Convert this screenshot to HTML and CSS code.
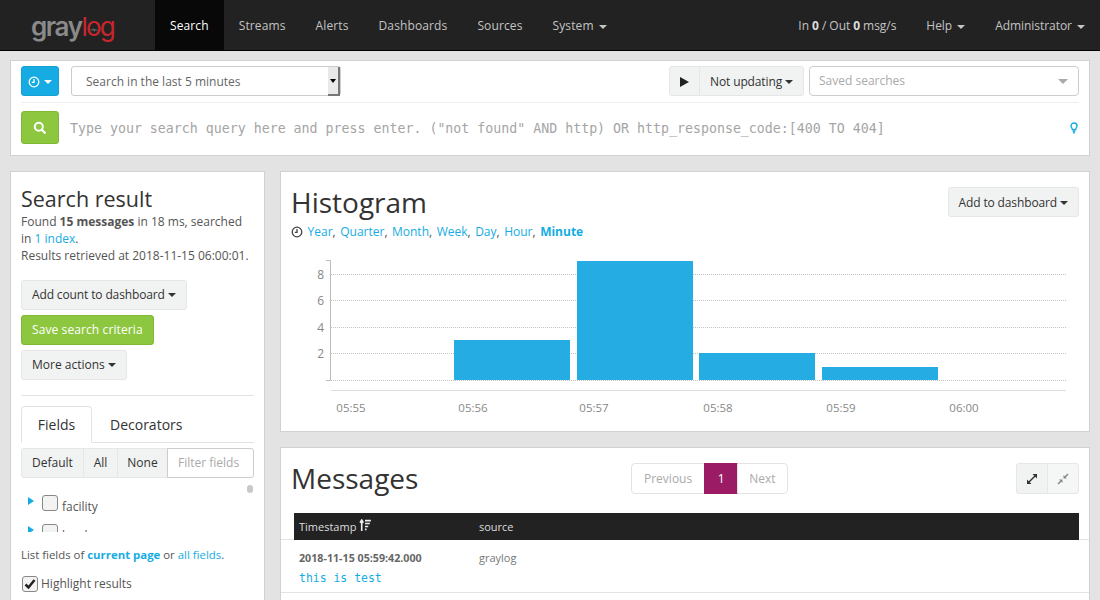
FILE: index.html
```html
<!DOCTYPE html>
<html lang="en">
<head>
    <meta charset="UTF-8">
    <title>Graylog - Search</title>
    <link rel="stylesheet" href="styles.css">
</head>
<body>
    <nav class="navbar">
        <a class="brand">
            <span class="brand-gray">gray</span><span class="brand-red">l<span class="brand-o">o<svg viewBox="0 0 12 8"><path d="M1 4h3l1-2 1.500 4 1-3 .5 1h3"/></svg></span>g</span>
        </a>
        <ul class="nav-links nav-left">
            <li class="active">Search</li>
            <li>Streams</li>
            <li>Alerts</li>
            <li>Dashboards</li>
            <li>Sources</li>
            <li>System <i class="caret"></i></li>
        </ul>
        <ul class="nav-links nav-right">
            <li>In <b>0</b> / Out <b>0</b> msg/s</li>
            <li>Help <i class="caret"></i></li>
            <li>Administrator <i class="caret"></i></li>
        </ul>
    </nav>

    <main class="page">
        <section class="box search-bar">
            <div class="search-top">
                <button class="btn btn-info btn-range">
                    <svg class="icon" viewBox="0 0 12 12"><circle cx="6" cy="6" r="4.800"/><path d="M6 3v3.300H3.800"/></svg>
                    <i class="caret"></i>
                </button>
                <div class="range-select">
                    <span class="range-text">Search in the last 5 minutes</span>
                    <span class="range-arrow"></span>
                </div>
                <div class="btn-group refresh">
                    <button class="btn btn-play"><span class="play"></span></button>
                    <button class="btn btn-tight">Not updating <i class="caret"></i></button>
                </div>
                <div class="saved">
                    <span>Saved searches</span>
                    <i class="saved-arrow"></i>
                </div>
            </div>
            <div class="search-query">
                <button class="btn btn-success btn-go">
                    <svg viewBox="0 0 14 14"><circle cx="5.800" cy="5.800" r="4"/><path d="M8.800 8.800l3.700 3.700"/></svg>
                </button>
                <span class="query-text">Type your search query here and press enter. ("not found" AND http) OR http_response_code:[400 TO 404]</span>
                <svg class="bulb" viewBox="0 0 8 12"><path d="M4 1a3 3 0 0 0-3 3c0 1.500 1.300 2.200 1.500 3.800h3C5.700 6.200 7 5.500 7 4a3 3 0 0 0-3-3z"/><path d="M2.800 9.200h2.400M3.200 10.800h1.600"/></svg>
            </div>
        </section>

        <div class="columns">
            <aside class="box sidebar">
                <h2>Search result</h2>
                <p class="summary">Found <b>15 messages</b> in 18 ms, searched in <a>1 index</a>.<br>Results retrieved at 2018-11-15 06:00:01.</p>
                <div class="actions">
                    <button class="btn btn-tight">Add count to dashboard <i class="caret"></i></button>
                    <button class="btn btn-success">Save search criteria</button>
                    <button class="btn">More actions <i class="caret"></i></button>
                </div>
                <hr>
                <div class="tabs">
                    <span class="tab active">Fields</span>
                    <span class="tab">Decorators</span>
                </div>
                <div class="filter-row">
                    <button class="btn">Default</button>
                    <button class="btn">All</button>
                    <button class="btn">None</button>
                    <span class="filter-input">Filter fields</span>
                </div>
                <div class="field-list">
                    <i class="scroll-thumb"></i>
                    <div class="field"><i class="arrow"></i><i class="check"></i><span>facility</span></div>
                    <div class="field"><i class="arrow"></i><i class="check"></i><span>level</span></div>
                </div>
                <p class="list-note">List fields of <a><b>current page</b></a> or <a>all fields</a>.</p>
                <div class="highlight">
                    <i class="check checked"><svg viewBox="0 0 14 14"><path d="M2.500 7.500l3 3 6-7.500"/></svg></i>
                    <span>Highlight results</span>
                </div>
            </aside>

            <div class="main-col">
                <section class="box histogram">
                    <div class="panel-head">
                        <h1>Histogram</h1>
                        <button class="btn btn-tight">Add to dashboard <i class="caret"></i></button>
                    </div>
                    <p class="resolutions">
                        <svg class="icon-clock" viewBox="0 0 12 12"><circle cx="6" cy="6" r="4.800"/><path d="M6 3v3.300H3.800"/></svg>
                        <a>Year</a>, <a>Quarter</a>, <a>Month</a>, <a>Week</a>, <a>Day</a>, <a>Hour</a>, <a><b>Minute</b></a>
                    </p>
                    <svg class="chart" viewBox="0 0 787 164" width="787" height="164">
                        <g class="grid">
                            <path d="M40 24.500H775M40 50.500H775M40 77.500H775M40 103.500H775M40 130.500H775"/>
                        </g>
                        <g class="bars">
                            <rect x="163" y="90" width="116" height="40"/>
                            <rect x="286" y="11" width="116" height="119"/>
                            <rect x="408" y="103" width="116" height="27"/>
                            <rect x="531" y="117" width="116" height="13"/>
                        </g>
                        <path class="axis" d="M35 10.500h4.500v120H35"/>
                        <path class="axis-x" d="M40 140.500H775"/>
                        <g class="y-labels">
                            <text x="33" y="29">8</text>
                            <text x="33" y="55">6</text>
                            <text x="33" y="82">4</text>
                            <text x="33" y="108">2</text>
                        </g>
                        <g class="x-labels">
                            <text x="60" y="162">05:55</text>
                            <text x="182" y="162">05:56</text>
                            <text x="303" y="162">05:57</text>
                            <text x="427" y="162">05:58</text>
                            <text x="550" y="162">05:59</text>
                            <text x="673" y="162">06:00</text>
                        </g>
                    </svg>
                </section>

                <section class="box messages">
                    <div class="panel-head messages-head">
                        <h1>Messages</h1>
                        <div class="pager">
                            <span class="page-item">Previous</span>
                            <span class="page-item current">1</span>
                            <span class="page-item">Next</span>
                        </div>
                        <div class="btn-group expand">
                            <button class="btn">
                                <svg viewBox="0 0 12 12"><path d="M1 11V6.500L5.500 11zM11 1v4.500L6.500 1z"/><path class="arrow-line" d="M3 9l6-6"/></svg>
                            </button>
                            <button class="btn btn-light">
                                <svg viewBox="0 0 12 12"><path d="M5.500 6.500V10L2 6.500zM6.500 5.500V2L10 5.500z"/><path class="arrow-line" d="M1 11l3-3M8 4l3-3"/></svg>
                            </button>
                        </div>
                    </div>
                    <div class="table-wrap">
                        <div class="msg-header">
                            <span class="col-time">Timestamp
                                <svg class="sort" viewBox="0 0 12 12"><path d="M2.500 11V2M1 3.500L2.500 1 4 3.500M5.500 1.500H11M5.500 4.200H10M5.500 6.900H8.500M5.500 9.600H7"/></svg>
                            </span>
                            <span>source</span>
                        </div>
                        <div class="msg-row">
                            <div class="msg-top">
                                <span class="col-time msg-time">2018-11-15 05:59:42.000</span>
                                <span class="msg-source">graylog</span>
                            </div>
                            <code>this is test</code>
                        </div>
                    </div>
                </section>
            </div>
        </div>
    </main>
</body>
</html>
```

FILE: styles.css
```css
* {
    box-sizing: border-box;
}
html, body {
    height: 600px;
    overflow: hidden;
}
body {
    margin: 0;
    background: #e3e3e3;
    color: #555;
    font-family: 'Open Sans', sans-serif;
    font-size: 12px;
    line-height: 17px;
}
a {
    color: #16ace3;
}
b {
    font-weight: 700;
}
h1, h2 {
    margin: 0;
    font-weight: 400;
    color: #333;
}
.caret {
    display: inline-block;
    width: 0;
    height: 0;
    margin-left: 2px;
    vertical-align: middle;
    border-top: 4px solid;
    border-left: 4px solid transparent;
    border-right: 4px solid transparent;
}

/* navbar */
.navbar {
    display: flex;
    height: 51px;
    background: #222;
    border-bottom: 1px solid #000;
    color: #c4c4c4;
}
.brand {
    width: 155px;
    padding-top: 9px;
    padding-left: 31px;
    font-family: 'Inter', sans-serif;
    font-size: 26px;
    line-height: 36px;
    letter-spacing: -1.400px;
}
.brand-gray {
    color: #8a8a8a;
    font-weight: 600;
}
.brand-red {
    color: #c9252c;
    font-weight: 400;
    letter-spacing: -1.800px;
}
.brand-o {
    position: relative;
}
.brand-o svg {
    position: absolute;
    left: 4px;
    top: 16px;
    width: 8px;
    height: 6px;
    fill: none;
    stroke: #8a8a8a;
    stroke-width: 1;
}
.nav-links {
    display: flex;
    margin: 0;
    padding: 0;
    list-style: none;
}
.nav-links li {
    height: 50px;
    padding: 0 15px;
    line-height: 51px;
}
.nav-left li {
    letter-spacing: .12px;
}
.nav-links .active {
    background: #080808;
    color: #fff;
}
.nav-links b {
    color: #ddd;
}
.nav-right {
    margin-left: auto;
    letter-spacing: -.05px;
}

/* shared */
.page {
    padding: 9px 10px 0;
}
.box {
    background: #fff;
    border: 1px solid #d1d1d1;
}
.btn {
    height: 30px;
    padding: 0 10px;
    background: #f1f2f2;
    border: 1px solid #e6e6e6;
    border-radius: 3px;
    color: #333;
    font-family: inherit;
    font-size: 12px;
}
.btn .caret {
    margin-left: 0;
}
.btn-tight {
    letter-spacing: -.13px;
}
.btn-info {
    background: #16ace3;
    border-color: #16a0d3;
    color: #fff;
}
.btn-success {
    background: #8dc63f;
    border-color: #7eb835;
    color: #fff;
    letter-spacing: .1px;
}
.btn-group {
    display: flex;
}
.btn-group .btn:first-child {
    border-radius: 3px 0 0 3px;
}
.btn-group .btn:last-child {
    margin-left: -1px;
    border-radius: 0 3px 3px 0;
}

/* search bar */
.search-bar {
    height: 96px;
    padding: 5px 10px 0;
}
.search-top {
    display: flex;
    height: 37px;
    border-bottom: 1px solid #eee;
}
.btn-range {
    width: 38px;
    height: 30px;
    padding: 0;
}
.btn-range .icon {
    width: 12px;
    height: 12px;
    vertical-align: -2px;
    fill: none;
    stroke: #fff;
    stroke-width: 1.300;
}
.range-select {
    display: flex;
    width: 270px;
    height: 30px;
    margin-left: 12px;
    border: 1px solid #ccc;
    border-radius: 3px;
    color: #666;
}
.range-text {
    flex: 1;
    padding-left: 14px;
    line-height: 29px;
}
.range-arrow {
    position: relative;
    width: 12px;
    height: 29px;
    background: #e9e9e9;
    border-right: 2px solid #777;
    border-bottom: 2px solid #777;
}
.range-arrow::after {
    content: '';
    position: absolute;
    left: 2px;
    top: 12px;
    border-top: 4px solid #000;
    border-left: 3px solid transparent;
    border-right: 3px solid transparent;
}
.refresh {
    margin-left: auto;
}
.btn-play {
    width: 31px;
    padding: 0;
}
.play {
    display: inline-block;
    border-left: 9px solid #222;
    border-top: 5px solid transparent;
    border-bottom: 5px solid transparent;
    vertical-align: middle;
}
.saved {
    display: flex;
    align-items: center;
    justify-content: space-between;
    width: 270px;
    height: 30px;
    margin-left: 5px;
    padding: 0 9px;
    border: 1px solid #ccc;
    border-radius: 4px;
    color: #aaa;
}
.saved span {
    margin-top: -2px;
}
.saved-arrow {
    margin-right: 1px;
    border-top: 5px solid #aaa;
    border-left: 5px solid transparent;
    border-right: 5px solid transparent;
}
.search-query {
    display: flex;
    align-items: center;
    padding-top: 8px;
}
.btn-go {
    width: 38px;
    height: 33px;
    padding: 0;
    line-height: 0;
}
.btn-go svg {
    width: 14px;
    height: 14px;
    fill: none;
    stroke: #fff;
    stroke-width: 2;
}
.query-text {
    margin-top: 1px;
    margin-left: 11px;
    font-family: 'DejaVu Sans Mono', monospace;
    font-size: 13.280px;
    color: #a5a5a5;
    white-space: nowrap;
}
.bulb {
    width: 8px;
    height: 12px;
    margin-left: auto;
    margin-right: 1px;
    fill: none;
    stroke: #16ace3;
    stroke-width: 1.400;
}

/* columns */
.columns {
    display: grid;
    grid-template-columns: 255px 810px;
    gap: 15px;
    margin-top: 15px;
}
.main-col {
    display: flex;
    flex-direction: column;
    gap: 15px;
}

/* sidebar */
.sidebar {
    height: 429px;
    padding: 14px 10px 0;
    border-bottom: 0;
    overflow: hidden;
}
.sidebar h2 {
    font-size: 21.500px;
    line-height: 26px;
}
.summary {
    margin: 1px 0 0;
}
.actions {
    display: flex;
    flex-direction: column;
    align-items: flex-start;
    gap: 5px;
    margin-top: 16px;
}
.actions .btn, .filter-row .btn {
    padding-bottom: 2px;
}
.sidebar hr {
    margin: 15px 0 10px;
    border: 0;
    border-top: 1px solid #e3e3e3;
}
.tabs {
    display: flex;
    height: 37px;
    border-bottom: 1px solid #e3e3e3;
    font-size: 14px;
}
.tab {
    height: 37px;
    padding: 0 18px;
    line-height: 37px;
    color: #333;
}
.tab.active {
    width: 71px;
    background: #fff;
    border: 1px solid #e3e3e3;
    border-bottom-color: #fff;
    border-radius: 4px 4px 0 0;
    line-height: 36px;
    padding: 0;
    text-align: center;
}
.filter-row {
    display: flex;
    margin-top: 5px;
}
.filter-row .btn {
    margin-right: -1px;
    padding-left: 0;
    padding-right: 0;
    border-radius: 0;
}
.filter-row .btn:nth-child(1) {
    width: 63px;
    border-radius: 3px 0 0 3px;
}
.filter-row .btn:nth-child(2) {
    width: 35px;
}
.filter-row .btn:nth-child(3) {
    width: 51px;
}
.filter-input {
    flex: 1;
    height: 30px;
    padding-left: 10px;
    border: 1px solid #ccc;
    border-radius: 0 3px 3px 0;
    line-height: 27px;
    color: #aaa;
}
.field-list {
    position: relative;
    height: 47px;
    margin-top: 7px;
    overflow: hidden;
}
.scroll-thumb {
    position: absolute;
    right: 1px;
    top: 0;
    width: 6px;
    height: 8px;
    background: #c8c8c8;
    border-radius: 3px;
}
.field {
    display: flex;
    align-items: flex-start;
    height: 29px;
    padding: 10px 0 0 7px;
}
.field span {
    margin-left: 4px;
    margin-top: 3px;
}
.arrow {
    margin-top: 2px;
    border-left: 6px solid #16ace3;
    border-top: 4.500px solid transparent;
    border-bottom: 4.500px solid transparent;
}
.check {
    flex: none;
    display: block;
    width: 16px;
    height: 16px;
    margin-left: 8px;
    background: #f3f3f3;
    border: 1px solid #888;
    border-radius: 3px;
}
.list-note {
    margin: 14px 0 0;
    font-size: 11.400px;
}
.highlight {
    display: flex;
    align-items: center;
    gap: 3px;
    margin-top: 12px;
}
.highlight .check {
    margin-left: 1px;
}
.checked svg {
    display: block;
    fill: none;
    stroke: #222;
    stroke-width: 2.500;
}

/* panels */
.panel-head {
    display: flex;
    align-items: flex-start;
    justify-content: space-between;
    padding: 15px 10px 0;
}
.panel-head h1 {
    margin-top: -1px;
    font-size: 28px;
    line-height: 32px;
}
.histogram {
    height: 261px;
}
.resolutions {
    margin: 5px 0 0 10px;
    color: #555;
    word-spacing: 1.400px;
}
.icon-clock {
    width: 12px;
    height: 12px;
    vertical-align: -2px;
    fill: none;
    stroke: #444;
    stroke-width: 1.300;
}
.chart {
    display: block;
    margin: 10px 0 0 10px;
    font-family: 'Open Sans', sans-serif;
    font-size: 11.500px;
}
.grid path {
    fill: none;
    stroke: #c4c4c4;
    stroke-dasharray: 1 1;
}
.bars rect {
    fill: #25ace3;
}
.axis {
    fill: none;
    stroke: #bbb;
}
.axis-x {
    fill: none;
    stroke: #ddd;
}
.y-labels text {
    fill: #888;
    font-size: 12px;
    text-anchor: end;
}
.x-labels text {
    fill: #888;
    text-anchor: middle;
}

/* messages */
.messages {
    height: 153px;
    border-bottom: 0;
    overflow: hidden;
}
.messages-head {
    position: relative;
    height: 65px;
}
.pager {
    position: absolute;
    left: 351px;
    top: 15px;
    display: flex;
}
.page-item {
    height: 31px;
    padding: 0 12px;
    margin-left: -1px;
    border: 1px solid #e3e3e3;
    line-height: 29px;
    color: #aaa;
}
.page-item:first-child {
    border-radius: 4px 0 0 4px;
}
.page-item:last-child {
    padding: 0 11px;
    border-radius: 0 4px 4px 0;
}
.page-item.current {
    width: 34px;
    padding: 0;
    text-align: center;
    background: #9b1c64;
    border-color: #9b1c64;
    color: #fff;
}
.expand {
    margin-left: auto;
}
.expand .btn {
    width: 32px;
    height: 31px;
    padding: 0;
    line-height: 0;
}
.expand .btn-light {
    background: #f5f6f6;
}
.expand svg {
    width: 12px;
    height: 12px;
    fill: #333;
}
.expand .btn-light svg {
    fill: #888;
}
.arrow-line {
    fill: none;
    stroke: #333;
    stroke-width: 1.500;
}
.expand .btn-light .arrow-line {
    stroke: #888;
}
.table-wrap {
    position: relative;
}
.msg-header {
    position: relative;
    z-index: 1;
    display: flex;
    height: 27px;
    margin: 0 10px 0 13px;
    padding-left: 5px;
    background: #222;
    color: #ddd;
    font-size: 11px;
    line-height: 27px;
}
.col-time {
    width: 180px;
}
.sort {
    width: 13px;
    height: 13px;
    vertical-align: -1px;
    fill: none;
    stroke: #eee;
    stroke-width: 1.500;
}
.msg-row {
    height: 54px;
    margin-top: -1px;
    padding: 10px 0 0 18px;
    border-top: 1px solid #e3e3e3;
    border-bottom: 1px solid #e3e3e3;
    font-size: 11px;
}
.msg-top {
    display: flex;
}
.msg-time {
    font-size: 10.700px;
    font-weight: 700;
    color: #666;
}
.msg-source {
    margin-top: -1px;
    color: #777;
}
.msg-row code {
    display: block;
    margin-top: 3px;
    font-family: 'DejaVu Sans Mono', monospace;
    font-size: 11.460px;
    color: #16ace3;
}
```
